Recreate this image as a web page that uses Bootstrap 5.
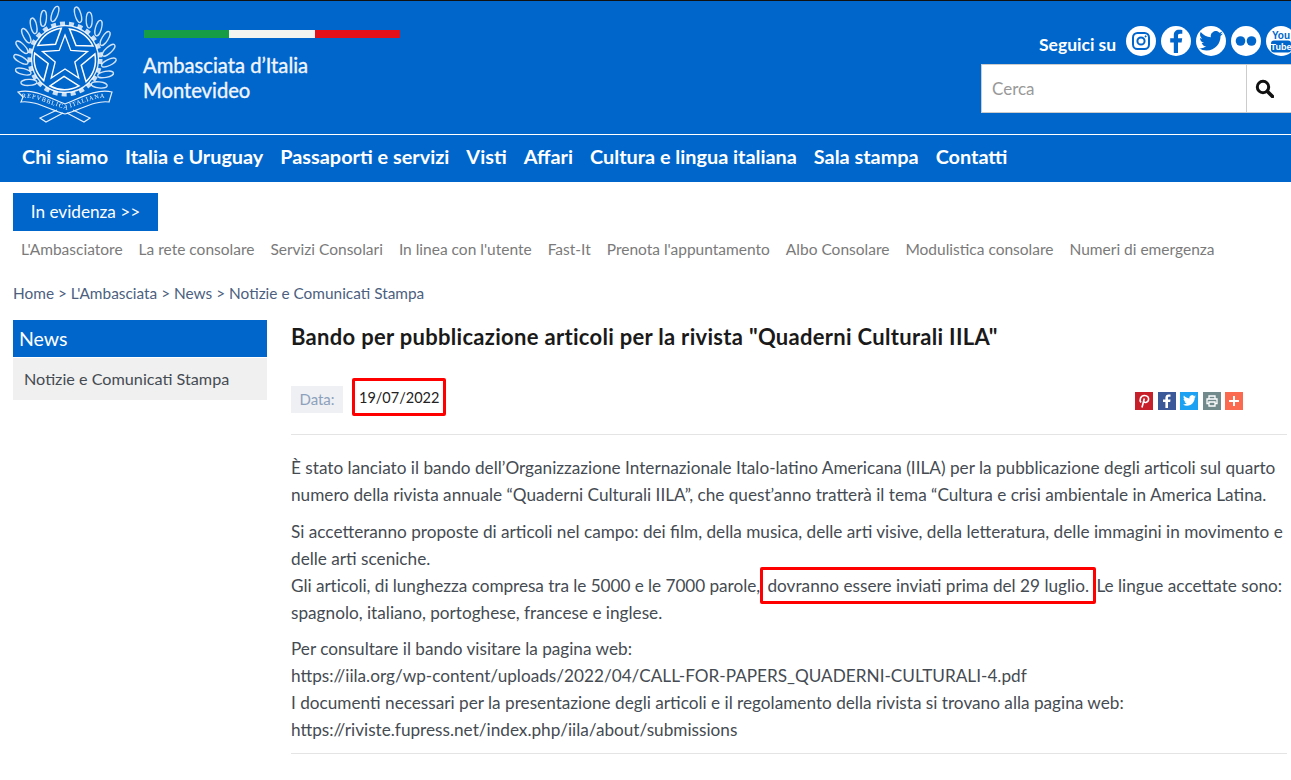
<!DOCTYPE html>
<html lang="it">
<head>
<meta charset="utf-8">
<title>Ambasciata d'Italia Montevideo</title>
<link href="https://cdn.jsdelivr.net/npm/bootstrap@5.3.0/dist/css/bootstrap.min.css" rel="stylesheet">
<style>
html,body{overflow:hidden;height:780px}
body{font-family:"Lato","Noto Sans",sans-serif;font-size:16px;color:#454b52;background:#fff;border-top:1px solid #111}
.site-top{background:#0066cc;height:133px;color:#fff;padding-left:10px}
.emblem{width:110px;height:125px;margin-top:1px;flex:none;filter:blur(.4px)}
.brand-block{margin-left:24px;margin-top:29px;width:256px}
.flag-bar{height:8px;display:flex}
.flag-bar span{flex:1}
.brand-name{font-size:20.200px;line-height:25px;font-weight:400;-webkit-text-stroke:.35px #f2f6fc;margin:15px 0 0 -1px;color:#f2f6fc}
.top-right{width:310px;margin-left:auto;padding-top:25px}
.follow-row{height:30px;white-space:nowrap;width:320px;margin-left:-2px;gap:5px}
.follow-label{font-weight:700;font-size:17.500px;margin:8px 5px 0 60px}
.soc{width:30px;height:30px;border-radius:50%;background:#fff;flex:none;display:flex;align-items:center;justify-content:center;color:#0066cc}
.search-box{height:49px;margin-top:8px;background:#fff;border:1px solid #ccc;border-right:0;display:flex}
.search-text{flex:1;color:#999;font-size:17px;line-height:47px;padding-left:10px;border-right:1px solid #ccc}
.search-go{width:44px;display:flex;align-items:center;justify-content:center;padding-right:9px}
.main-nav{background:#0066cc;border-top:1px solid #fff;height:48px;padding:0 0 3px 22px;gap:17px;align-items:center}
.main-nav a{color:#fff;font-weight:700;font-size:19.850px;text-decoration:none;white-space:nowrap}
.evid-btn{background:#0066cc;color:#fff;font-size:17.200px;width:145px;height:38px;line-height:38px;text-align:center;margin:11px 0 0 13px}
.sub-links{margin:6px 0 0 21px;gap:16px;height:26px;align-items:center}
.sub-links a{color:#7a7a7a;text-decoration:none;font-size:15.500px;white-space:nowrap}
.crumbs{margin:18px 0 0 13px;font-size:15.400px;line-height:24px;color:#4d5f80}
.content-row{margin-top:15px;padding-left:13px;gap:24px}
.side-col{width:254px;flex:none}
.side-head{background:#0066cc;color:#fff;font-size:19.500px;height:37px;line-height:37px;padding-left:6px}
.side-item{background:#f0f0f0;margin-top:1px;height:42px;line-height:42px;padding-left:11px;font-size:16.200px}
.main-col{width:996px;flex:none}
.art-title{font-size:22px;font-weight:700;color:#1a1a1a;margin:3px 0 0;line-height:28px;letter-spacing:.3px;white-space:nowrap}
.meta-row{margin-top:27px;height:57px;border-bottom:1px solid #e4e4e4;padding-bottom:18px;align-items:center}
.date-label{background:#eef0f3;color:#8da1bd;font-size:15px;width:52px;height:27px;line-height:27px;text-align:center;margin-top:4px}
.date-val{margin-left:9px;border:3px solid #f00;border-radius:2px;padding:0 4px;height:38px;line-height:34px;font-size:14.500px;color:#222;width:94px;white-space:nowrap}
.share{margin-left:auto;margin-right:44px;gap:4.500px;margin-top:7px}
.share span{width:18px;height:18px;display:flex;align-items:center;justify-content:center}
.art-body{margin-top:19px;font-size:17.200px;line-height:27px;border-bottom:1px solid #e4e4e4;padding-bottom:10px;white-space:nowrap}
.art-body p{margin:0 0 9.500px}
.art-body p:last-child{margin-bottom:0}
.tight-run{letter-spacing:-.045px}
.mark-red{border:3px solid #f00;border-radius:2px;padding:5px 4px;margin:0 -4px 0 -4px}
</style>
</head>
<body>
<header class="site-top d-flex">
  <svg class="emblem" viewBox="0 0 110 125" fill="none" stroke="#fff" aria-hidden="true">
    <defs>
      <ellipse id="lf-a" cx="51" cy="11" rx="8" ry="3" transform="rotate(-62 51 11)"/>
      <ellipse id="lf-b" cx="59" cy="11" rx="8" ry="3" transform="rotate(62 59 11)"/>
      <path id="wedge" d="M59.500 27A31 31 0 0 1 83 44L66 43.500Z"/>
    </defs>
    <g stroke-width="1.300" opacity=".82">
      <use href="#lf-a" transform="rotate(-8 55 55)"/><use href="#lf-a" transform="rotate(-24 55 55)"/><use href="#lf-a" transform="rotate(-40 55 55)"/><use href="#lf-a" transform="rotate(-56 55 55)"/><use href="#lf-a" transform="rotate(-72 55 55)"/><use href="#lf-a" transform="rotate(-88 55 55)"/><use href="#lf-a" transform="rotate(-104 55 55)"/><use href="#lf-a" transform="rotate(-120 55 55)"/>
      <use href="#lf-b" transform="rotate(12 55 55)"/><use href="#lf-b" transform="rotate(28 55 55)"/><use href="#lf-b" transform="rotate(44 55 55)"/><use href="#lf-b" transform="rotate(60 55 55)"/><use href="#lf-b" transform="rotate(76 55 55)"/><use href="#lf-b" transform="rotate(92 55 55)"/><use href="#lf-b" transform="rotate(108 55 55)"/><use href="#lf-b" transform="rotate(124 55 55)"/>
    </g>
    <circle cx="55" cy="57" r="35.500" stroke-width="4" stroke-dasharray="5 4" opacity=".8"/>
    <circle cx="55" cy="57" r="33.500" stroke-width="1.300" opacity=".9"/>
    <g stroke-width="1.500">
      <use href="#wedge"/><use href="#wedge" transform="rotate(72 55 57)"/><use href="#wedge" transform="rotate(144 55 57)"/><use href="#wedge" transform="rotate(216 55 57)"/><use href="#wedge" transform="rotate(288 55 57)"/>
    </g>
    <path d="M55 33L60.800 48.500 77.500 49.500 64.800 60 68.800 76 55 67 41.200 76 45.200 60 32.500 49.500 49.200 48.500Z" stroke-width="1.300"/>
    <g stroke-width="1.200" opacity=".9">
      <path d="M8 90C23 86 40 96 55 102 70 96 87 86 102 90L99 100C85 98 70 108 55 112 40 108 25 98 11 100L13 95Z" fill="#0066cc"/>
      <path d="M47 108L30 116 36 120 53 111M63 108L80 116 74 120 57 111"/>
    </g>
    <path id="rib" d="M12 96C25 94 40 103 55 107 70 103 85 94 98 96" stroke="none"/>
    <text font-size="6.200" font-family="Liberation Serif,serif" fill="#fff" stroke="none"><textPath href="#rib" textLength="86">REPVBBLICA ITALIANA</textPath></text>
  </svg>
  <div class="brand-block">
    <div class="flag-bar"><span style="background:#169c45"></span><span style="background:#f4f5f0"></span><span style="background:#e3101a"></span></div>
    <div class="brand-name">Ambasciata d’Italia<br>Montevideo</div>
  </div>
  <div class="top-right">
    <div class="follow-row d-flex align-items-center">
      <span class="follow-label">Seguici su</span>
      <span class="soc"><svg width="20" height="20" viewBox="0 0 20 20" fill="none" stroke="#0066cc" stroke-width="2"><rect x="2" y="2" width="16" height="16" rx="4.500"/><circle cx="10" cy="10" r="3.600"/><circle cx="14.600" cy="5.400" r=".6" fill="#0066cc" stroke-width="1"/></svg></span>
      <span class="soc"><svg width="18" height="24" viewBox="0 0 18 24" fill="#0066cc"><path d="M11 24V13.500h3.600l.6-4.200H11V6.700c0-1.200.4-2 2.100-2h2.200V1c-.4 0-1.700-.2-3.200-.2C8.900.8 6.800 2.700 6.800 6.200v3.100H3.200v4.200h3.600V24z"/></svg></span>
      <span class="soc"><svg width="24" height="20" viewBox="0 0 24 20" fill="#0066cc"><path d="M24 2.400c-.9.400-1.800.7-2.800.8 1-.6 1.800-1.600 2.200-2.700-1 .6-2 1-3.100 1.200A4.900 4.900 0 0 0 11.900 6.200C7.800 6 4.200 4 1.700.9c-1.300 2.300-.6 5.200 1.500 6.600-.8 0-1.600-.2-2.200-.6 0 2.400 1.700 4.400 3.900 4.900-.7.200-1.500.2-2.200.1.600 2 2.400 3.400 4.600 3.400A9.900 9.900 0 0 1 0 17.300 14 14 0 0 0 7.500 19.500c9.100 0 14.300-7.700 14-14.600 1-.7 1.800-1.500 2.500-2.500z"/></svg></span>
      <span class="soc"><svg width="22" height="10" viewBox="0 0 22 10" fill="#0066cc"><circle cx="5.500" cy="5" r="4.800"/><circle cx="16.500" cy="5" r="4.800"/></svg></span>
      <span class="soc"><svg width="22" height="24" viewBox="0 0 22 24"><text x="11" y="10" text-anchor="middle" font-size="10" font-weight="700" font-family="Liberation Sans Narrow,Liberation Sans,sans-serif" fill="#0066cc">You</text><rect x="1" y="11.500" width="20" height="12" rx="3" fill="#0066cc"/><text x="11" y="21" text-anchor="middle" font-size="9" font-weight="700" font-family="Liberation Sans,sans-serif" fill="#fff">Tube</text></svg></span>
    </div>
    <div class="search-box">
      <div class="search-text">Cerca</div>
      <div class="search-go"><svg width="19" height="19" viewBox="0 0 19 19" fill="none" stroke="#111"><circle cx="8" cy="8" r="5.700" stroke-width="3"/><path d="M12.500 12.500l5 5" stroke-width="3.600" stroke-linecap="round"/></svg></div>
    </div>
  </div>
</header>
<nav class="main-nav d-flex">
  <a href="#">Chi siamo</a><a href="#">Italia e Uruguay</a><a href="#">Passaporti e servizi</a><a href="#">Visti</a><a href="#">Affari</a><a href="#">Cultura e lingua italiana</a><a href="#">Sala stampa</a><a href="#">Contatti</a>
</nav>
<div class="evid-btn">In evidenza &gt;&gt;</div>
<div class="sub-links d-flex">
  <a href="#">L'Ambasciatore</a><a href="#">La rete consolare</a><a href="#">Servizi Consolari</a><a href="#">In linea con l'utente</a><a href="#">Fast-It</a><a href="#">Prenota l'appuntamento</a><a href="#">Albo Consolare</a><a href="#">Modulistica consolare</a><a href="#">Numeri di emergenza</a>
</div>
<div class="crumbs">Home &gt; L'Ambasciata &gt; News &gt; Notizie e Comunicati Stampa</div>
<div class="content-row d-flex">
  <aside class="side-col">
    <div class="side-head">News</div>
    <div class="side-item">Notizie e Comunicati Stampa</div>
  </aside>
  <main class="main-col">
    <h1 class="art-title">Bando per pubblicazione articoli per la rivista "Quaderni Culturali IILA"</h1>
    <div class="meta-row d-flex">
      <div class="date-label">Data:</div>
      <div class="date-val">19/07/2022</div>
      <div class="share d-flex">
        <span style="background:#c8202b"><svg width="12" height="14" viewBox="0 0 12 14" fill="none" stroke="#fff" stroke-width="1.600"><path d="M3 8.500C1 6 2.500 1.500 6.500 1.500c3 0 4.500 2 4 4.500-.5 2.300-3.500 3.500-4.500 1.500M6.300 4.500L4 13.500"/></svg></span>
        <span style="background:#3b5998"><svg width="9" height="14" viewBox="0 0 9 14" fill="#fff"><path d="M6 14V8h2.200l.3-2.500H6V4c0-.7.200-1.200 1.200-1.200h1.300V.6C8.300.6 7.500.5 6.600.5 4.700.5 3.400 1.700 3.400 3.800v1.700H1V8h2.400v6z"/></svg></span>
        <span style="background:#1da1f2"><svg width="13" height="11" viewBox="0 0 24 20" fill="#fff"><path d="M24 2.400c-.9.400-1.800.7-2.800.8 1-.6 1.800-1.600 2.200-2.700-1 .6-2 1-3.100 1.200A4.900 4.900 0 0 0 11.900 6.200C7.800 6 4.200 4 1.700.9c-1.300 2.300-.6 5.200 1.500 6.600-.8 0-1.600-.2-2.200-.6 0 2.400 1.700 4.400 3.900 4.900-.7.200-1.500.2-2.200.1.600 2 2.400 3.400 4.600 3.400A9.900 9.900 0 0 1 0 17.300 14 14 0 0 0 7.500 19.500c9.100 0 14.300-7.700 14-14.600 1-.7 1.800-1.500 2.500-2.500z"/></svg></span>
        <span style="background:#738a8d"><svg width="12" height="12" viewBox="0 0 12 12" fill="none" stroke="#fff" stroke-width="1.300"><path d="M3 3.500V1h6v2.500M3 8.500H1V4h10v4.500H9M3 7h6v4H3z"/></svg></span>
        <span style="background:#fb6a4f"><svg width="10" height="10" viewBox="0 0 10 10" fill="#fff"><path d="M4 0h2v4h4v2H6v4H4V6H0V4h4z"/></svg></span>
      </div>
    </div>
    <div class="art-body">
      <p>È stato lanciato il bando dell’Organizzazione Internazionale Italo-latino Americana (IILA) per la pubblicazione degli articoli sul quarto<br>numero della rivista annuale “Quaderni Culturali IILA”, che quest’anno tratterà il tema “Cultura e crisi ambientale in America Latina.</p>
      <p>Si accetteranno proposte di articoli nel campo: dei film, della musica, delle arti visive, della letteratura, delle immagini in movimento e<br>delle arti sceniche.<br><span class="tight-run">Gli articoli, di lunghezza compresa tra le 5000 e le 7000 parole,</span> <span class="mark-red">dovranno essere inviati prima del 29 luglio.</span> Le lingue accettate sono:<br>spagnolo, italiano, portoghese, francese e inglese.</p>
      <p>Per consultare il bando visitare la pagina web:<br>https://iila.org/wp-content/uploads/2022/04/CALL-FOR-PAPERS_QUADERNI-CULTURALI-4.pdf<br>I documenti necessari per la presentazione degli articoli e il regolamento della rivista si trovano alla pagina web:<br>https://riviste.fupress.net/index.php/iila/about/submissions</p>
    </div>
  </main>
</div>
<script src="https://cdn.jsdelivr.net/npm/bootstrap@5.3.0/dist/js/bootstrap.bundle.min.js"></script>
</body>
</html>
